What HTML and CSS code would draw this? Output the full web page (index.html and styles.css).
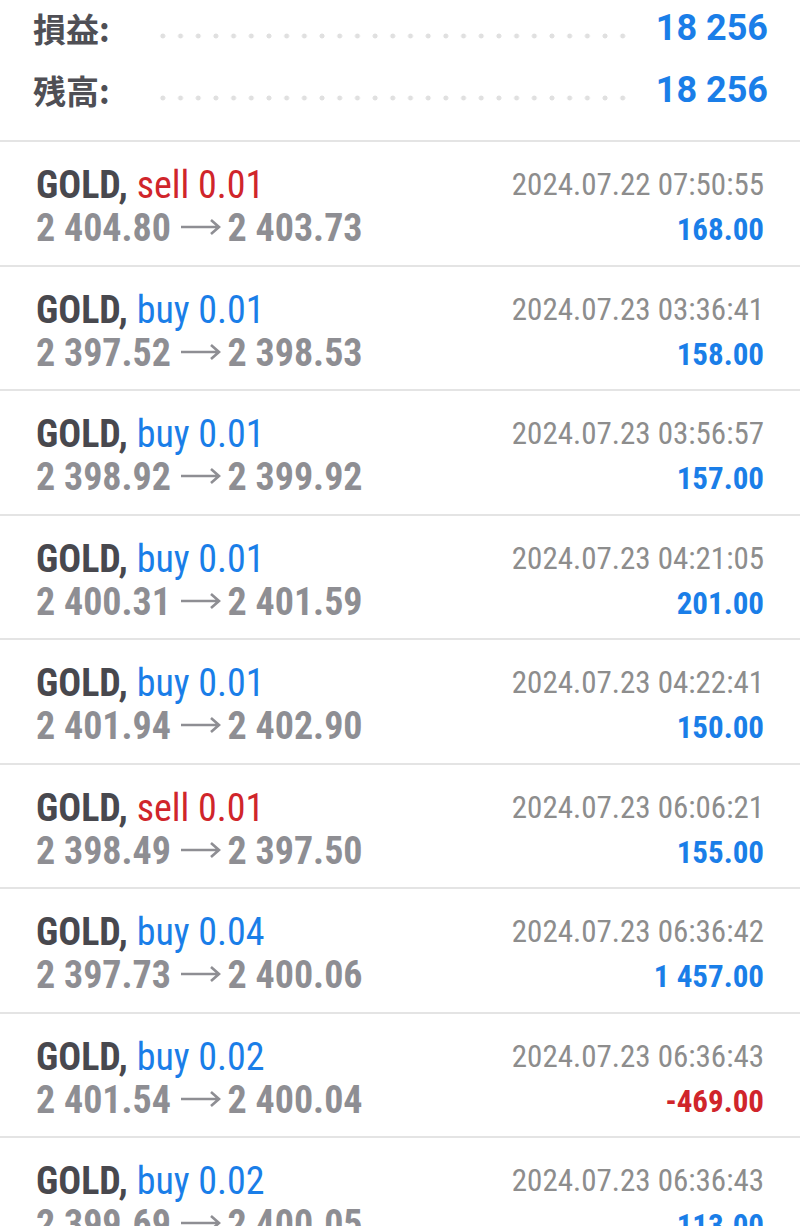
FILE: index.html
```html
<!DOCTYPE html>
<html lang="ja">
<head>
  <meta charset="UTF-8">
  <meta name="viewport" content="width=device-width, initial-scale=1.0">
  <title>History</title>
  <link rel="stylesheet" href="styles.css">
</head>
<body>
  <div class="summary">
    <div class="summary__row">
      <span class="summary__label">損益:</span>
      <span class="summary__dots"></span>
      <span class="summary__value">18 256</span>
    </div>
    <div class="summary__row">
      <span class="summary__label">残高:</span>
      <span class="summary__dots"></span>
      <span class="summary__value">18 256</span>
    </div>
  </div>

  <ul class="deals">
    <li class="deal">
      <div class="deal__left">
        <div class="deal__title">GOLD, <span class="sell">sell 0.01</span></div>
        <div class="deal__prices">2 404.80 <svg class="arrow" viewBox="0 0 40 16"><path d="M0 8h38M30 1l8 7-8 7"/></svg> 2 403.73</div>
      </div>
      <div class="deal__right">
        <div class="deal__time">2024.07.22 07:50:55</div>
        <div class="deal__profit">168.00</div>
      </div>
    </li>
    <li class="deal">
      <div class="deal__left">
        <div class="deal__title">GOLD, <span class="buy">buy 0.01</span></div>
        <div class="deal__prices">2 397.52 <svg class="arrow" viewBox="0 0 40 16"><path d="M0 8h38M30 1l8 7-8 7"/></svg> 2 398.53</div>
      </div>
      <div class="deal__right">
        <div class="deal__time">2024.07.23 03:36:41</div>
        <div class="deal__profit">158.00</div>
      </div>
    </li>
    <li class="deal">
      <div class="deal__left">
        <div class="deal__title">GOLD, <span class="buy">buy 0.01</span></div>
        <div class="deal__prices">2 398.92 <svg class="arrow" viewBox="0 0 40 16"><path d="M0 8h38M30 1l8 7-8 7"/></svg> 2 399.92</div>
      </div>
      <div class="deal__right">
        <div class="deal__time">2024.07.23 03:56:57</div>
        <div class="deal__profit">157.00</div>
      </div>
    </li>
    <li class="deal">
      <div class="deal__left">
        <div class="deal__title">GOLD, <span class="buy">buy 0.01</span></div>
        <div class="deal__prices">2 400.31 <svg class="arrow" viewBox="0 0 40 16"><path d="M0 8h38M30 1l8 7-8 7"/></svg> 2 401.59</div>
      </div>
      <div class="deal__right">
        <div class="deal__time">2024.07.23 04:21:05</div>
        <div class="deal__profit">201.00</div>
      </div>
    </li>
    <li class="deal">
      <div class="deal__left">
        <div class="deal__title">GOLD, <span class="buy">buy 0.01</span></div>
        <div class="deal__prices">2 401.94 <svg class="arrow" viewBox="0 0 40 16"><path d="M0 8h38M30 1l8 7-8 7"/></svg> 2 402.90</div>
      </div>
      <div class="deal__right">
        <div class="deal__time">2024.07.23 04:22:41</div>
        <div class="deal__profit">150.00</div>
      </div>
    </li>
    <li class="deal">
      <div class="deal__left">
        <div class="deal__title">GOLD, <span class="sell">sell 0.01</span></div>
        <div class="deal__prices">2 398.49 <svg class="arrow" viewBox="0 0 40 16"><path d="M0 8h38M30 1l8 7-8 7"/></svg> 2 397.50</div>
      </div>
      <div class="deal__right">
        <div class="deal__time">2024.07.23 06:06:21</div>
        <div class="deal__profit">155.00</div>
      </div>
    </li>
    <li class="deal">
      <div class="deal__left">
        <div class="deal__title">GOLD, <span class="buy">buy 0.04</span></div>
        <div class="deal__prices">2 397.73 <svg class="arrow" viewBox="0 0 40 16"><path d="M0 8h38M30 1l8 7-8 7"/></svg> 2 400.06</div>
      </div>
      <div class="deal__right">
        <div class="deal__time">2024.07.23 06:36:42</div>
        <div class="deal__profit">1 457.00</div>
      </div>
    </li>
    <li class="deal">
      <div class="deal__left">
        <div class="deal__title">GOLD, <span class="buy">buy 0.02</span></div>
        <div class="deal__prices">2 401.54 <svg class="arrow" viewBox="0 0 40 16"><path d="M0 8h38M30 1l8 7-8 7"/></svg> 2 400.04</div>
      </div>
      <div class="deal__right">
        <div class="deal__time">2024.07.23 06:36:43</div>
        <div class="deal__profit deal__profit--loss">-469.00</div>
      </div>
    </li>
    <li class="deal">
      <div class="deal__left">
        <div class="deal__title">GOLD, <span class="buy">buy 0.02</span></div>
        <div class="deal__prices">2 399.69 <svg class="arrow" viewBox="0 0 40 16"><path d="M0 8h38M30 1l8 7-8 7"/></svg> 2 400.05</div>
      </div>
      <div class="deal__right">
        <div class="deal__time">2024.07.23 06:36:43</div>
        <div class="deal__profit">113.00</div>
      </div>
    </li>
  </ul>
</body>
</html>
```

FILE: styles.css
```css
* {
  box-sizing: border-box;
}

body {
  margin: 0;
  background-color: #fff;
  font-family: "Roboto Condensed", "Liberation Sans Narrow", "DejaVu Sans Condensed", Roboto, sans-serif;
  overflow: hidden;
}

.summary {
  display: flex;
  flex-direction: column;
  gap: 6px;
  padding: 0 32px 0 33px;
  height: 142px;
  border-bottom: 2px solid #e4e4e4;
}

.summary__row {
  display: flex;
  align-items: center;
  height: 56px;
}

.summary__label {
  font-family: "Noto Sans CJK JP", sans-serif;
  font-size: 33px;
  font-weight: 700;
  color: #4f4f55;
}

.summary__dots {
  flex: 1;
  height: 6px;
  margin: 16px 30px 0 44px;
  background-image: radial-gradient(circle, #e0e0e0 2.3px, transparent 2.7px);
  background-size: 17.7px 6px;
  background-repeat: repeat-x;
}

.summary__value {
  font-family: Roboto, sans-serif;
  font-size: 36px;
  font-weight: 700;
  color: #1a7ee8;
}

.deals {
  list-style: none;
  margin: 0;
  padding: 0;
}

.deal {
  display: flex;
  justify-content: space-between;
  height: 124.5px;
  padding: 20px 36px 0 36px;
  border-bottom: 2px solid #e4e4e4;
}

.deal__title {
  font-size: 38px;
  line-height: 46px;
  font-weight: 700;
  color: #48484e;
}

.deal__title span {
  font-weight: 400;
}

.sell {
  color: #d0252b;
}

.buy {
  color: #1a7ee8;
}

.deal__prices {
  font-size: 38px;
  line-height: 40px;
  font-weight: 700;
  color: #8e8e93;
}

.arrow {
  width: 40px;
  height: 16px;
  margin: 0 -2px 0 1px;
  vertical-align: 6px;
  fill: none;
  stroke: #8e8e93;
  stroke-width: 2.6;
}

.deal__right {
  text-align: right;
}

.deal__time {
  font-size: 31px;
  line-height: 46px;
  color: #8d8d8d;
}

.deal__profit {
  font-size: 31px;
  line-height: 44px;
  font-weight: 700;
  color: #1a7ee8;
}

.deal__profit--loss {
  color: #d0252b;
}
```
